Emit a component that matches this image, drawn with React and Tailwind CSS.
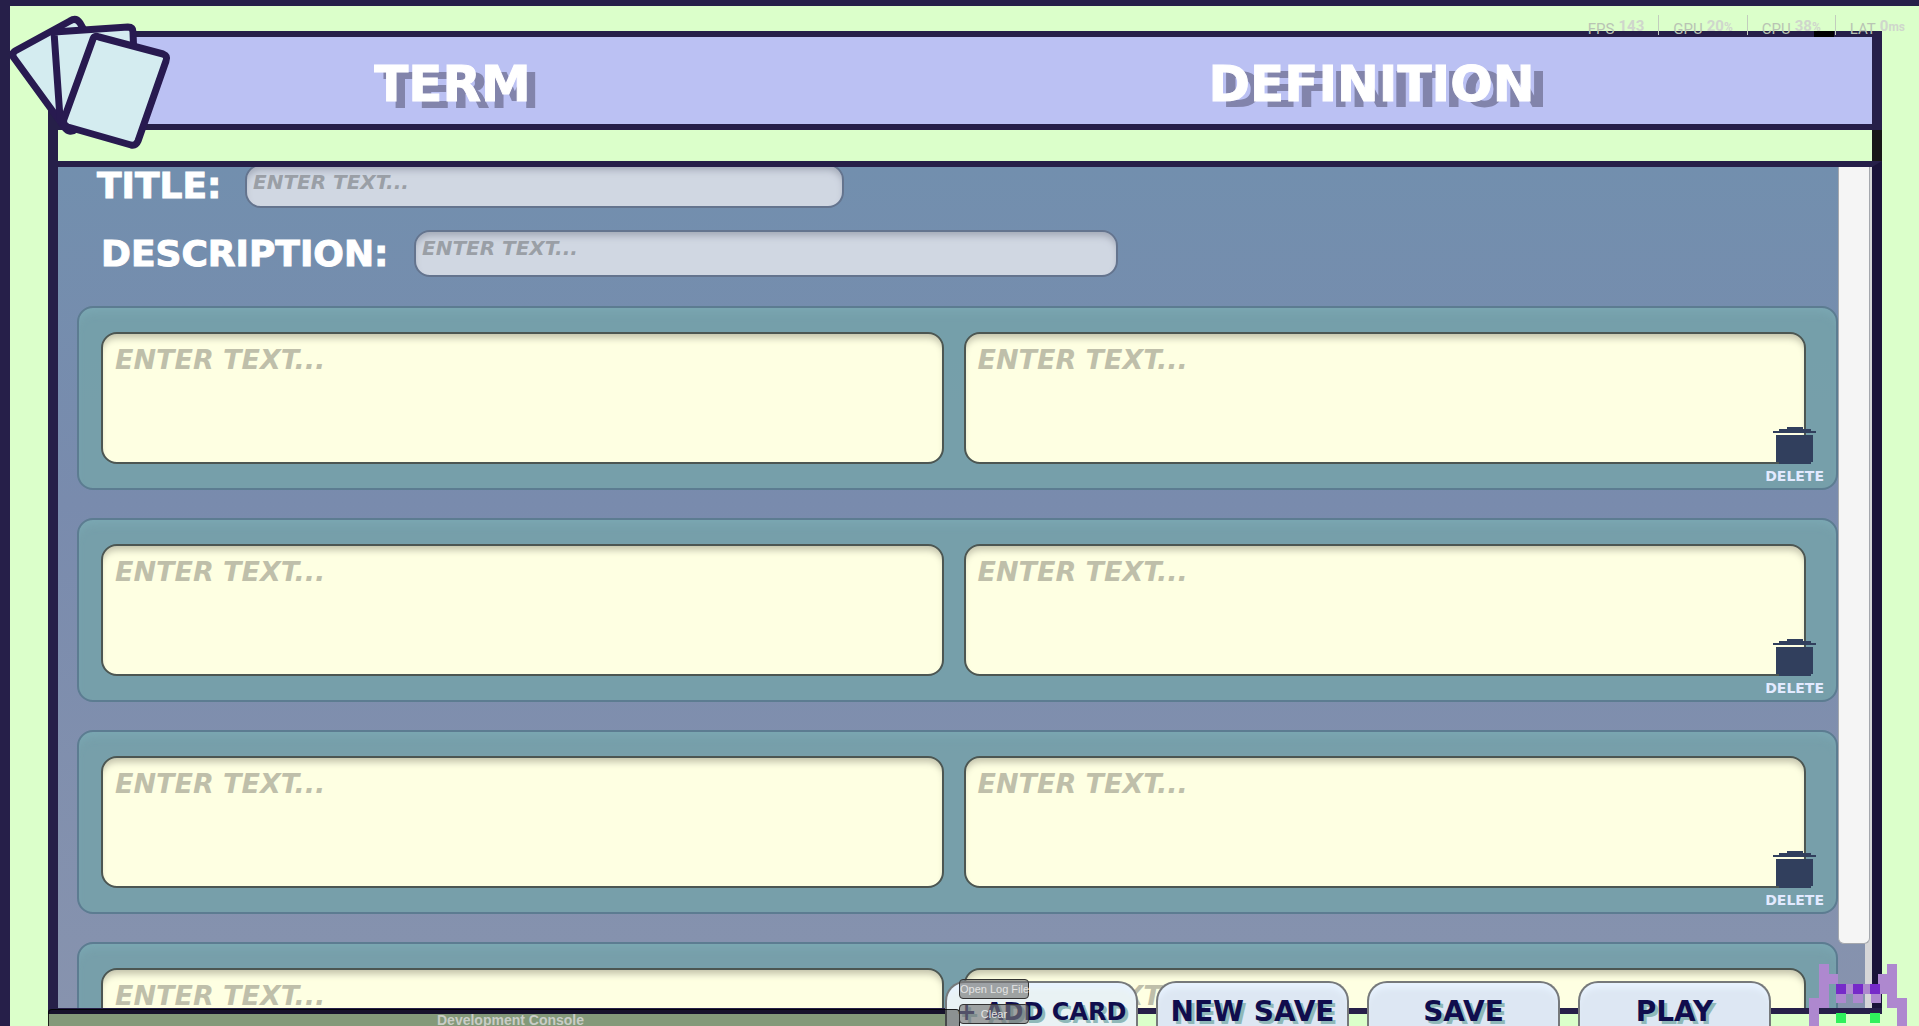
import React from 'react';

const CARDS = [1, 2, 3, 4];

const STATS = [
  { label: 'FPS', value: '143', unit: '' },
  { label: 'GPU', value: '20', unit: '%' },
  { label: 'CPU', value: '38', unit: '%' },
  { label: 'LAT', value: '0', unit: 'ms' },
];

function CardStack() {
  return (
    <svg
      className="absolute -top-1.5 -left-2.5 z-10 h-[160px] w-[180px]"
      viewBox="0 0 180 160"
      fill="#d4ecf0"
      stroke="#281a50"
      strokeWidth="7"
      strokeLinejoin="round"
      aria-hidden="true"
    >
      <path d="M15 51 L70 21 Q76 17 80 23 L84 30 L130 100 L76 129 Q70 134 65 128 L14 58 Q11 54 15 51 Z" />
      <path d="M54 32 L128 27 Q133 27 133 32 L136 110 L66 125 Q61 124 60 118 Z" />
      <path d="M93 39 Q94 35 99 37 L163 54 Q168 56 166 61 L138 141 Q136 146 131 145 L68 127 Q62 125 64 119 Z" />
    </svg>
  );
}

function Critter() {
  return (
    <svg
      className="absolute right-3 bottom-0 z-30 h-[62px] w-[98px]"
      viewBox="0 0 98 62"
      shapeRendering="crispEdges"
      aria-hidden="true"
    >
      <path
        fill="#ae88cf"
        d="M10 0h10v10h9v10h-9v24H10V62H0V34h10Z M78 0h10v34h10v28H88V44H78V30h-7V20h-2V10h9Z M29 20h42v10h1v9h-10v-9h-8v9H44v-9h-7v9H27v-9h2Z"
      />
      <path fill="#762ac9" d="M27 20h10v10H27Z M44 20h10v10H44Z M61 20h10v10H61Z" />
      <path fill="#2ff05c" d="M27 49h10v10H27Z M61 49h10v10H61Z" />
    </svg>
  );
}

function TrashIcon() {
  return (
    <svg className="h-[37px] w-[43px]" viewBox="0 0 43 37" shapeRendering="crispEdges" aria-hidden="true">
      <path
        fill="#313f5d"
        d="M14 0h16v2h8v2h5v2H0V4h6V2h8Z M3 8h37v27h-2v2H6v-2H3Z"
      />
    </svg>
  );
}

function Field({ id, label, labelClass, inputClass }) {
  return (
    <div className="flex items-center">
      <label
        htmlFor={id}
        className={'shrink-0 text-4xl font-bold text-white [-webkit-text-stroke:1px_white] ' + labelClass}
      >
        {label}
      </label>
      <input
        id={id}
        type="text"
        placeholder="ENTER TEXT..."
        className={
          'rounded-2xl border-2 border-[#64748e] bg-[#d0d7e2] px-1.5 text-xl font-bold text-[#555] shadow-[inset_0_6px_7px_-2px_#a3aab8] outline-none placeholder:italic placeholder:text-[#9a9fa6] ' +
          inputClass
        }
      />
    </div>
  );
}

function CardText({ label }) {
  return (
    <textarea
      aria-label={label}
      placeholder="ENTER TEXT..."
      className="h-[132px] min-w-0 flex-1 resize-none rounded-2xl border-2 border-[#4c5652] bg-[#feffe2] px-3 py-2 text-[27px] leading-9 font-bold text-[#555] shadow-[inset_0_7px_7px_-3px_#c2c2ab] outline-none placeholder:italic placeholder:text-[#bfbfaa]"
    />
  );
}

function FlashCard({ n }) {
  return (
    <article className="relative flex gap-5 rounded-2xl border-2 border-[#5c7c91] bg-[#76a1aa]/90 py-6 pr-[30px] pl-[22px] shadow-[inset_0_8px_8px_-4px_#7ba8b3]">
      <CardText label={`Term ${n}`} />
      <CardText label={`Definition ${n}`} />
      <button
        type="button"
        className="absolute right-3 bottom-1 flex flex-col items-center gap-1 text-sm leading-4 font-bold text-[#e2eaff]"
      >
        <TrashIcon />
        DELETE
      </button>
    </article>
  );
}

function ActionButton({ children, className }) {
  return (
    <button
      type="button"
      className={
        'h-[45px] w-[193px] rounded-t-[20px] border-2 border-b-0 border-[#76797b] pt-3.5 leading-7 font-bold whitespace-nowrap text-[#100d4d] shadow-[inset_0_8px_6px_-3px_#e8f3ff] [text-shadow:3px_3px_0_#8fb8b8] ' +
        className
      }
    >
      {children}
    </button>
  );
}

export default function App() {
  return (
    <div className="relative flex h-screen flex-col overflow-hidden border-t-6 border-l-10 border-[#261f49] bg-[#dbffca] pt-[25px] pr-[37px] pb-3 pl-[38px] font-['DejaVu_Sans',sans-serif]">
      <div className="flex min-h-0 flex-1 flex-col border-y-6 border-l-10 border-[#261f49]">
        <header className="flex h-[93px] shrink-0 items-center border-r-10 border-b-6 border-[#261f49] bg-[#bbc1f3] pt-2 text-[50px] font-bold text-white [-webkit-text-stroke:1px_white]">
          <h1 className="w-[43.5%] text-center [text-shadow:9px_7px_0_#8284ab]">TERM</h1>
          <h1 className="flex-1 pr-4 pl-10 text-center [text-shadow:13px_6px_0_#8284ab]">DEFINITION</h1>
        </header>

        <div className="h-[31px] shrink-0 border-r-10 border-[#171717]" />

        <main className="flex min-h-0 flex-1 overflow-hidden border-t-6 border-r-10 border-t-[#261f49] border-r-[#1a1339] bg-linear-to-b from-[#728fae] via-[#798bad] via-40% to-[#8793ae] pl-[19px]">
          <div className="flex min-w-0 flex-1 flex-col">
            <form className="-mt-[3px] mb-[29px] flex flex-col gap-[22px]">
              <Field id="title" label="TITLE:" labelClass="w-[168px] pl-5" inputClass="h-11 w-[34%] pb-2" />
              <Field id="description" label="DESCRIPTION:" labelClass="w-[337px] pl-6" inputClass="h-[47px] w-[40%] pb-3" />
            </form>
            <section className="flex flex-col gap-7">
              {CARDS.map((n) => (
                <FlashCard key={n} n={n} />
              ))}
            </section>
          </div>
          <div className="w-[34px] shrink-0 border-r-7 border-[#d6d6d8]">
            <div className="h-[777px] w-8 rounded-b-md border border-t-0 border-[#a5a8ae] bg-[#f5f5f5]" />
          </div>
        </main>
      </div>

      <div className="absolute top-[25px] right-[85px] z-10 h-1.5 w-5 bg-black" />
      <div className="absolute top-[9px] right-0 z-20 flex font-['Roboto',sans-serif] text-[15px] text-[#b9c4b4]">
        {STATS.map(({ label, value, unit }) => (
          <div key={label} className="flex h-5 items-end gap-1 border-l border-[#c2cdbd] px-3.5 leading-3 first:border-l-0">
            <span>{label}</span>
            <span className="font-bold text-[#cfd6cc]">
              {value}
              <span className="text-xs">{unit}</span>
            </span>
          </div>
        ))}
      </div>

      <nav className="absolute right-[148px] bottom-0 z-10 flex gap-[18px]">
        <ActionButton className="bg-[#e9f2f4] text-2xl">+ ADD CARD</ActionButton>
        <ActionButton className="bg-[#dde7f3] text-[28px]">NEW SAVE</ActionButton>
        <ActionButton className="bg-[#dde7f3] text-[28px]">SAVE</ActionButton>
        <ActionButton className="bg-[#dde7f3] text-[28px]">PLAY</ActionButton>
      </nav>

      <aside className="absolute bottom-0 left-[38px] z-20 h-[17px] w-[912px] rounded-t-sm border border-b-0 border-black/80 bg-black/40 pl-[388px] font-['Liberation_Sans',sans-serif]">
        <h2 className="pt-0.5 text-sm leading-4 font-bold text-[#c9cdc6]">Development Console</h2>
        <div className="absolute right-0 bottom-0 flex w-0 flex-col gap-[5px] pb-0.5 text-[#e4e4e4]">
          <button type="button" className="h-5 w-[70px] rounded border border-[#333] bg-[#777]/65 text-[11px] leading-4 whitespace-nowrap">
            Open Log File
          </button>
          <button type="button" className="h-5 w-[70px] rounded border border-[#333] bg-[#777]/65 text-[11px] leading-4">
            Clear
          </button>
        </div>
      </aside>

      <CardStack />
      <Critter />
    </div>
  );
}
